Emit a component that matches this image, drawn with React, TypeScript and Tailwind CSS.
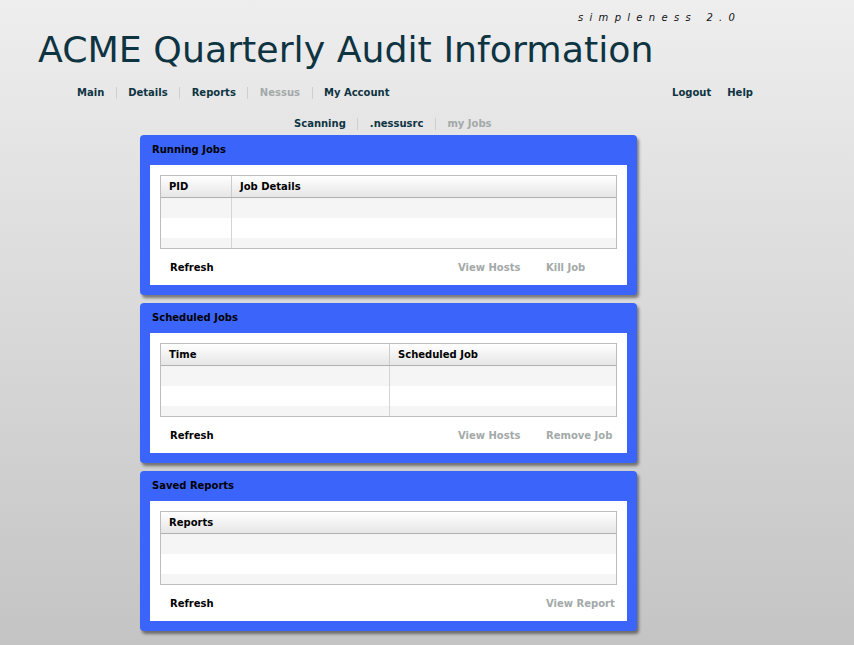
import React from 'react';

type Action = { label: string; width: string };

interface PanelProps {
  title: string;
  columns: { label: string; className: string }[];
  actions: Action[];
}

const navLeft = [
  { label: 'Main', active: true },
  { label: 'Details', active: true },
  { label: 'Reports', active: true },
  { label: 'Nessus', active: false },
  { label: 'My Account', active: true },
];

const subNav = [
  { label: 'Scanning', active: true },
  { label: '.nessusrc', active: true },
  { label: 'my Jobs', active: false },
];

const Sep = () => <span className="w-px h-[12px] bg-[#cfcfcf]" />;

const Panel: React.FC<PanelProps> = ({ title, columns, actions }) => {
  return (
    <div className="bg-[#3b64fb] rounded-[4px] shadow-[2px_3px_3px_rgba(0,0,0,0.45)] px-[10px] pb-[10px]">
      <div className="h-[30px] flex items-center pl-[2px] pb-[2px] text-[10px] font-bold text-black">
        {title}
      </div>
      <div className="bg-white p-[10px] pb-0">
        <div className="border border-[#bdbdbd] h-[74px] overflow-hidden">
          <div className="flex h-[22px] border-b border-[#b0b0b0] bg-gradient-to-b from-white to-[#e6e6e6]">
            {columns.map((c, i) => (
              <div
                key={c.label}
                className={`${c.className} flex items-center pl-[8px] text-[10px] font-bold text-black ${i < columns.length - 1 ? 'border-r border-[#cccccc]' : ''}`}
              >
                {c.label}
              </div>
            ))}
          </div>
          {['bg-[#f5f5f5]', 'bg-white', 'bg-[#f5f5f5]'].map((bg, r) => (
            <div key={r} className={`flex h-[20px] ${bg}`}>
              {columns.map((c, i) => (
                <div
                  key={c.label}
                  className={`${c.className} ${i < columns.length - 1 ? 'border-r border-[#d4d4d4]' : ''}`}
                />
              ))}
            </div>
          ))}
        </div>
        <div className="h-[36px] flex items-center text-[10px] font-bold">
          <span className="flex-1 pl-[10px] text-black">Refresh</span>
          {actions.map((a) => (
            <span key={a.label} className={`${a.width} text-[#a3a9a9]`}>
              {a.label}
            </span>
          ))}
        </div>
      </div>
    </div>
  );
};

export default function App() {
  return (
    <div
      className="min-h-screen bg-gradient-to-b from-[#eeeeee] to-[#c4c4c4] pb-[14px]"
      style={{ fontFamily: '"DejaVu Sans", Verdana, sans-serif' }}
    >
      {/* header */}
      <div className="pt-[12px] pl-[578px] h-[24px] text-[10px] leading-[12px] italic tracking-[6.3px] text-[#111]">
        simpleness 2.0
      </div>
      <h1 className="mt-[8px] pl-[38px] text-[36.3px] leading-[36px] text-[#0e3442]">
        ACME Quarterly Audit Information
      </h1>

      {/* main nav */}
      <div className="mt-[19px] flex items-center justify-between pl-[77px] pr-[101px] text-[10px] leading-[12px] font-bold">
        <div className="flex items-center gap-[11.5px]">
          {navLeft.map((n, i) => (
            <React.Fragment key={n.label}>
              {i > 0 && <Sep />}
              <span className={n.active ? 'text-[#0e3442]' : 'text-[#a3a9a9]'}>{n.label}</span>
            </React.Fragment>
          ))}
        </div>
        <div className="flex items-center gap-[16px] text-[#0e3442]">
          <span>Logout</span>
          <span>Help</span>
        </div>
      </div>

      {/* sub nav */}
      <div className="mt-[19px] flex items-center gap-[11.5px] pl-[294px] text-[10px] leading-[12px] font-bold">
        {subNav.map((n, i) => (
          <React.Fragment key={n.label}>
            {i > 0 && <Sep />}
            <span className={n.active ? 'text-[#0e3442]' : 'text-[#a3a9a9]'}>{n.label}</span>
          </React.Fragment>
        ))}
      </div>

      {/* panels */}
      <div className="mt-[5px] ml-[140px] w-[497px] flex flex-col gap-[8px]">
        <Panel
          title="Running Jobs"
          columns={[
            { label: 'PID', className: 'w-[71px]' },
            { label: 'Job Details', className: 'flex-1' },
          ]}
          actions={[
            { label: 'View Hosts', width: 'w-[88px]' },
            { label: 'Kill Job', width: 'w-[71px]' },
          ]}
        />
        <Panel
          title="Scheduled Jobs"
          columns={[
            { label: 'Time', className: 'w-[229px]' },
            { label: 'Scheduled Job', className: 'flex-1' },
          ]}
          actions={[
            { label: 'View Hosts', width: 'w-[88px]' },
            { label: 'Remove Job', width: 'w-[71px]' },
          ]}
        />
        <Panel
          title="Saved Reports"
          columns={[{ label: 'Reports', className: 'flex-1' }]}
          actions={[{ label: 'View Report', width: 'w-[71px]' }]}
        />
      </div>
    </div>
  );
}
